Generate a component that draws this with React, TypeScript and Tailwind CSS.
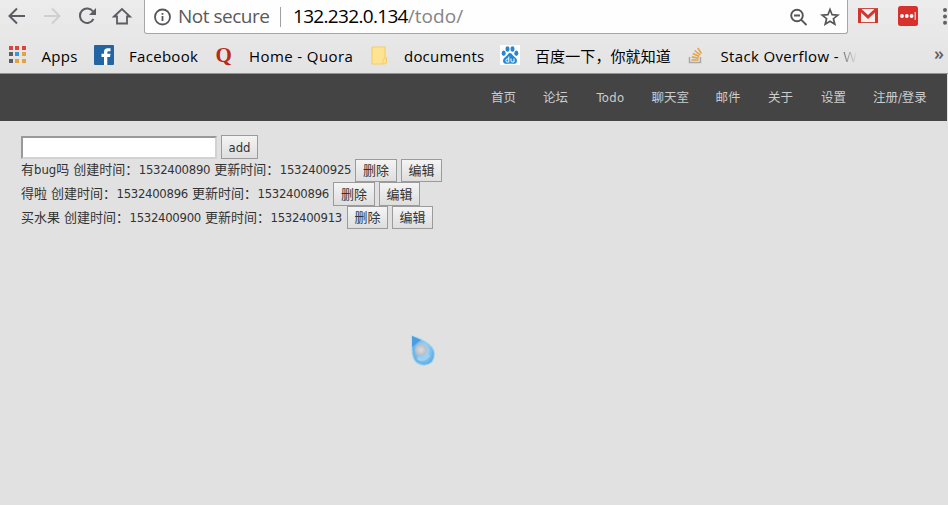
import type { ReactNode } from "react";

const ui = "font-['Open_Sans','Noto_Sans_CJK_SC',sans-serif] whitespace-nowrap";
const pageFont = "font-['DejaVu_Sans_Condensed','Noto_Sans_CJK_SC',sans-serif] whitespace-nowrap";

function Toolbar() {
  return (
    <div className="flex h-[35px] items-start">
      <svg className="h-[34px] w-[144px] shrink-0" viewBox="0 0 144 34" fill="none" strokeWidth="2">
        <path d="M25 16H10M17 8.5L9.5 16L17 23.5" stroke="#5c5c62" />
        <path d="M44 16H59M52 8.5L59.500 16L52 23.500" stroke="#cfcfcf" />
        <path d="M93 11.500A7.200 7.200 0 1 0 93.500 19" stroke="#5c5c62" />
        <path d="M96 8V15H89Z" fill="#5c5c62" />
        <path d="M114 16.500L122 9L130 16.500H127V23.500H117V16.500Z" stroke="#5c5c62" strokeWidth="1.800" />
      </svg>
      <div className="flex h-[34px] w-[704px] shrink-0 items-center rounded-b-[3px] border border-t-0 border-[#a6a6a8] bg-[#fefefe]">
        <svg className="ml-[9px] size-[18px] shrink-0" viewBox="0 0 18 18" fill="none" stroke="#55565a" strokeWidth="1.800">
          <circle cx="8.500" cy="9" r="7.500" />
          <path d="M8.500 8V13M8.500 5V6.800" />
        </svg>
        <span className={`${ui} ml-[6px] w-[102px] text-[19px] leading-[31px] tracking-[-0.500px] text-[#5a5a5a]`}>Not secure</span>
        <span className="h-[20px] w-px bg-[#a0a0a0]" />
        <span className={`${ui} ml-[12px] text-[19px] leading-[31px] tracking-[-0.680px] text-black`}>
          132.232.0.134<span className="tracking-[0.050px] text-[#858585]">/todo/</span>
        </span>
        <svg className="ml-auto mr-[5px] h-[24px] w-[52px]" viewBox="0 0 52 24" fill="none" stroke="#55555a" strokeWidth="1.900">
          <circle cx="7" cy="10.500" r="5.800" />
          <path d="M4 10.500H10M11.300 14.800L16.500 20" />
          <path d="M40 4.500L42.100 9.700L47.800 10.100L43.400 13.700L44.800 19.200L40 16.200L35.200 19.200L36.600 13.700L32.200 10.100L37.900 9.700Z" strokeWidth="1.700" />
        </svg>
      </div>
      <svg className="h-[34px] w-[100px] shrink-0" viewBox="848 0 100 34">
        <path d="M858 8.500H878V23H858Z" fill="#f4eeee" />
        <path d="M858 9H861.500L868 15L874.500 9H878V23H875V12.500L868 19L861 12.500V23H858Z" fill="#d3352e" />
        <path d="M858 8.500H878M861 22.500H875" stroke="#c94b43" />
        <rect x="898" y="6" width="20" height="20" rx="2.500" fill="#d8312d" />
        <g fill="#fff">
          <circle cx="902" cy="16" r="1.900" /><circle cx="906.800" cy="16" r="1.900" /><circle cx="911.600" cy="16" r="1.900" />
          <rect x="914.700" y="12" width="1" height="8" />
        </g>
        <g fill="#606065"><circle cx="945" cy="10" r="2" /><circle cx="945" cy="16.500" r="2" /><circle cx="945" cy="22.800" r="2" /></g>
      </svg>
    </div>
  );
}

function AppsIcon() {
  const colors = ["#db4438", "#db4438", "#db4438", "#5d5d65", "#3c96db", "#e4a33b", "#5d5d65", "#e4a33b", "#e4a33b"];
  return (
    <span className="mb-[2px] grid size-[17px] grid-cols-3 gap-[2.500px]">
      {colors.map((c, i) => <span key={i} style={{ background: c }} />)}
    </span>
  );
}

function FacebookIcon() {
  return (
    <svg className="size-[20px]" viewBox="0 0 20 20">
      <rect width="20" height="20" rx="1" fill="#2265a3" />
      <path d="M10 20V12H7.500V8.800H10V7Q10 3.300 13.700 3.300H16.500V6.300H14.700Q13.300 6.300 13.300 7.600V8.800H16.500L16 12H13.300V20Z" fill="#fff" />
    </svg>
  );
}

function FolderIcon() {
  return (
    <svg className="h-[19px] w-[17px]" viewBox="0 0 17 19">
      <path d="M2 1H15V12H16.500V16.500L14.500 18H2Z" fill="#fee392" stroke="#f4cf69" strokeWidth="1.200" />
      <path d="M13 17.500V14Q13 12.500 14.500 12.500" fill="none" stroke="#f4cf69" />
    </svg>
  );
}

function BaiduIcon() {
  return (
    <svg className="size-[20px]" viewBox="0 0 20 20">
      <rect width="20" height="20" fill="#fff" />
      <g fill="#2587d2">
        <ellipse cx="3.700" cy="8.300" rx="2" ry="2.700" /><ellipse cx="7.500" cy="4" rx="2" ry="2.800" />
        <ellipse cx="12.500" cy="4" rx="2" ry="2.800" /><ellipse cx="16.300" cy="8.300" rx="2" ry="2.700" />
        <path d="M10 8Q12 8 13 10.500L16.300 13.500Q18 17 15.500 18.500Q13.500 19 10 18.500Q6.500 19 4.500 18.500Q2 17 3.700 13.500L7 10.500Q8 8 10 8Z" />
      </g>
      <path d="M8.800 11.500V17H6.500Q5.200 15.500 6.500 14H8.800M11 13.500V16Q11 17 12 17H14V13.500" stroke="#fff" fill="none" />
    </svg>
  );
}

function StackIcon() {
  return (
    <svg className="h-[17px] w-[16px]" viewBox="0 0 16 17" fill="none">
      <path d="M1.500 10V15.500H12.500V10" stroke="#a7a9aa" strokeWidth="1.500" />
      <path d="M3.500 13H10.500M3.800 9.900L10.700 11.300M4.800 6.500L11.300 9.500M6.700 3.500L12.300 8M9.800 1L13.500 6.600" stroke="#e4a243" strokeWidth="1.600" />
    </svg>
  );
}

function Bookmark({ icon, label, width, gap, text }: { icon: ReactNode; label: ReactNode; width: string; gap: string; text: string }) {
  return (
    <div className={`flex shrink-0 items-center ${width} ${gap}`}>
      <span className="flex h-[24px] shrink-0 items-center pb-[2px]">{icon}</span>
      <span className={`${ui} leading-[22px] text-black ${text}`}>{label}</span>
    </div>
  );
}

function Bookmarks() {
  return (
    <div className="flex h-[38px] items-center pl-[8.500px] pt-[4px]">
      <Bookmark icon={<AppsIcon />} label="Apps" width="w-[85.500px]" gap="gap-[16px]" text="text-[15px] tracking-[0.300px]" />
      <Bookmark icon={<FacebookIcon />} label="Facebook" width="w-[121px]" gap="gap-[15px]" text="text-[15px] tracking-[0.300px]" />
      <Bookmark
        icon={<span className="w-[17px] pl-[0.500px] font-['Liberation_Serif',serif] text-[21px] font-bold leading-[22px] text-[#b92b17]">Q</span>}
        label="Home - Quora" width="w-[155px]" gap="gap-[17px]" text="text-[15px] tracking-[0.400px]" />
      <Bookmark icon={<FolderIcon />} label="documents" width="w-[130px]" gap="gap-[17px]" text="text-[15px] tracking-[0.200px]" />
      <Bookmark icon={<BaiduIcon />} label="百度一下，你就知道" width="w-[187.500px]" gap="gap-[15px]" text="text-[15px] tracking-[0.100px]" />
      <Bookmark
        icon={<StackIcon />} width="w-[170px]" gap="gap-[17px]" text="text-[15px] tracking-[0.350px]"
        label={<>Stack Overflow - <span className="bg-linear-to-r from-[#777] to-[#e4e4e4] bg-clip-text text-transparent">W</span></>} />
      <span className={`${ui} ml-auto pr-[4px] pb-[7px] text-[18px] font-semibold leading-[20px] text-[#606066]`}>»</span>
    </div>
  );
}

const nav = [
  ["首页", "w-[52px]"], ["论坛", "w-[53.500px]"], ["Todo", "w-[55px] mb-[2px] text-[13px] tracking-[0.300px]"], ["聊天室", "w-[64px]"],
  ["邮件", "w-[52.500px]"], ["关于", "w-[53px]"], ["设置", "w-[52px]"], ["注册/登录", "w-[55px]"],
];

function Nav() {
  return (
    <nav className={`${pageFont} mr-px flex h-[47px] items-center justify-end bg-[#444] pr-[19px] pt-[2px] text-[12.500px] text-[#ccc]`}>
      {nav.map(([label, width]) => <a key={label} className={`${width} shrink-0`}>{label}</a>)}
    </nav>
  );
}

function Button({ children, className }: { children: ReactNode; className: string }) {
  return (
    <button className={`${className} flex shrink-0 items-center justify-center border border-[#9b9b9b] bg-linear-to-b from-[#f4f4f4] to-[#dedede] text-[13px] leading-none text-[#333]`}>
      {children}
    </button>
  );
}

const todos = [
  { name: "有bug吗", created: "1532400890", updated: "1532400925", size: "h-[23px]", first: "h-[23px] w-[42px]", second: "h-[23px] w-[41px]", text: "w-[334px] leading-[22px]" },
  { name: "得啦", created: "1532400896", updated: "1532400896", size: "h-[24px]", first: "h-[24px] w-[42px]", second: "h-[24px] w-[41px]", text: "w-[312px] leading-[24px]" },
  { name: "买水果", created: "1532400900", updated: "1532400913", size: "h-[23px]", first: "h-[23px] w-[41px]", second: "h-[23px] w-[41px]", text: "w-[326px] leading-[24px]" },
];

function Field({ label, value }: { label: string; value: string }) {
  return (
    <span className="flex">
      <span className="w-[65.500px]">{label}</span>
      <span className="w-[71.500px] tracking-[-0.300px]">{value}</span>
    </span>
  );
}

export default function App() {
  return (
    <div className="h-[505px] w-[948px] overflow-hidden bg-[#e1e1e1]">
      <header className="h-[74px] border-b border-[#929292] bg-linear-to-b from-[#ececec] to-[#e3e3e3]">
        <Toolbar />
        <Bookmarks />
      </header>
      <Nav />
      <main className={`${pageFont} pl-[21px] pt-[14px] text-[13px] text-[#333]`}>
        <div className="flex h-[24px] items-center gap-[4px]">
          <input className="h-[23px] w-[196px] border-2 border-t-[#999] border-r-[#d2d2d2] border-b-[#d2d2d2] border-l-[#999] bg-white outline-none" />
          <Button className="h-[24px] w-[37px]">add</Button>
        </div>
        {todos.map((t) => (
          <div key={t.name} className={`flex items-start ${t.size}`}>
            <div className={`flex shrink-0 gap-[4px] ${t.text}`}>
              <span>{t.name}</span>
              <Field label="创建时间：" value={t.created} />
              <Field label="更新时间：" value={t.updated} />
            </div>
            <div className="flex gap-[4px]">
              <Button className={t.first}>删除</Button>
              <Button className={t.second}>编辑</Button>
            </div>
          </div>
        ))}
      </main>
      <svg className="absolute left-[407px] top-[332px] h-[38px] w-[34px]" viewBox="407 332 34 38">
        <defs>
          <radialGradient id="drop" cx=".5" cy=".5" r=".6"><stop offset="0" stopColor="#c9e8f8" /><stop offset="1" stopColor="#4b9fe2" /></radialGradient>
          <radialGradient id="pearl"><stop offset="0" stopColor="#dcdce0" /><stop offset="1" stopColor="#b4bbc3" /></radialGradient>
        </defs>
        <path d="M412 336Q426 340 432 347Q437 354 432 362Q425 368 417 363Q412 359 412 349Z" fill="url(#drop)" stroke="#a5dceb" strokeOpacity=".6" strokeWidth="1.500" />
        <path d="M412 336L421 340L412 347Z" fill="#4c9ce2" />
        <path d="M418 358Q423 362 429 355" fill="none" stroke="#9ad4f4" strokeWidth="3" />
        <circle cx="421" cy="350" r="6" fill="url(#pearl)" />
      </svg>
    </div>
  );
}
